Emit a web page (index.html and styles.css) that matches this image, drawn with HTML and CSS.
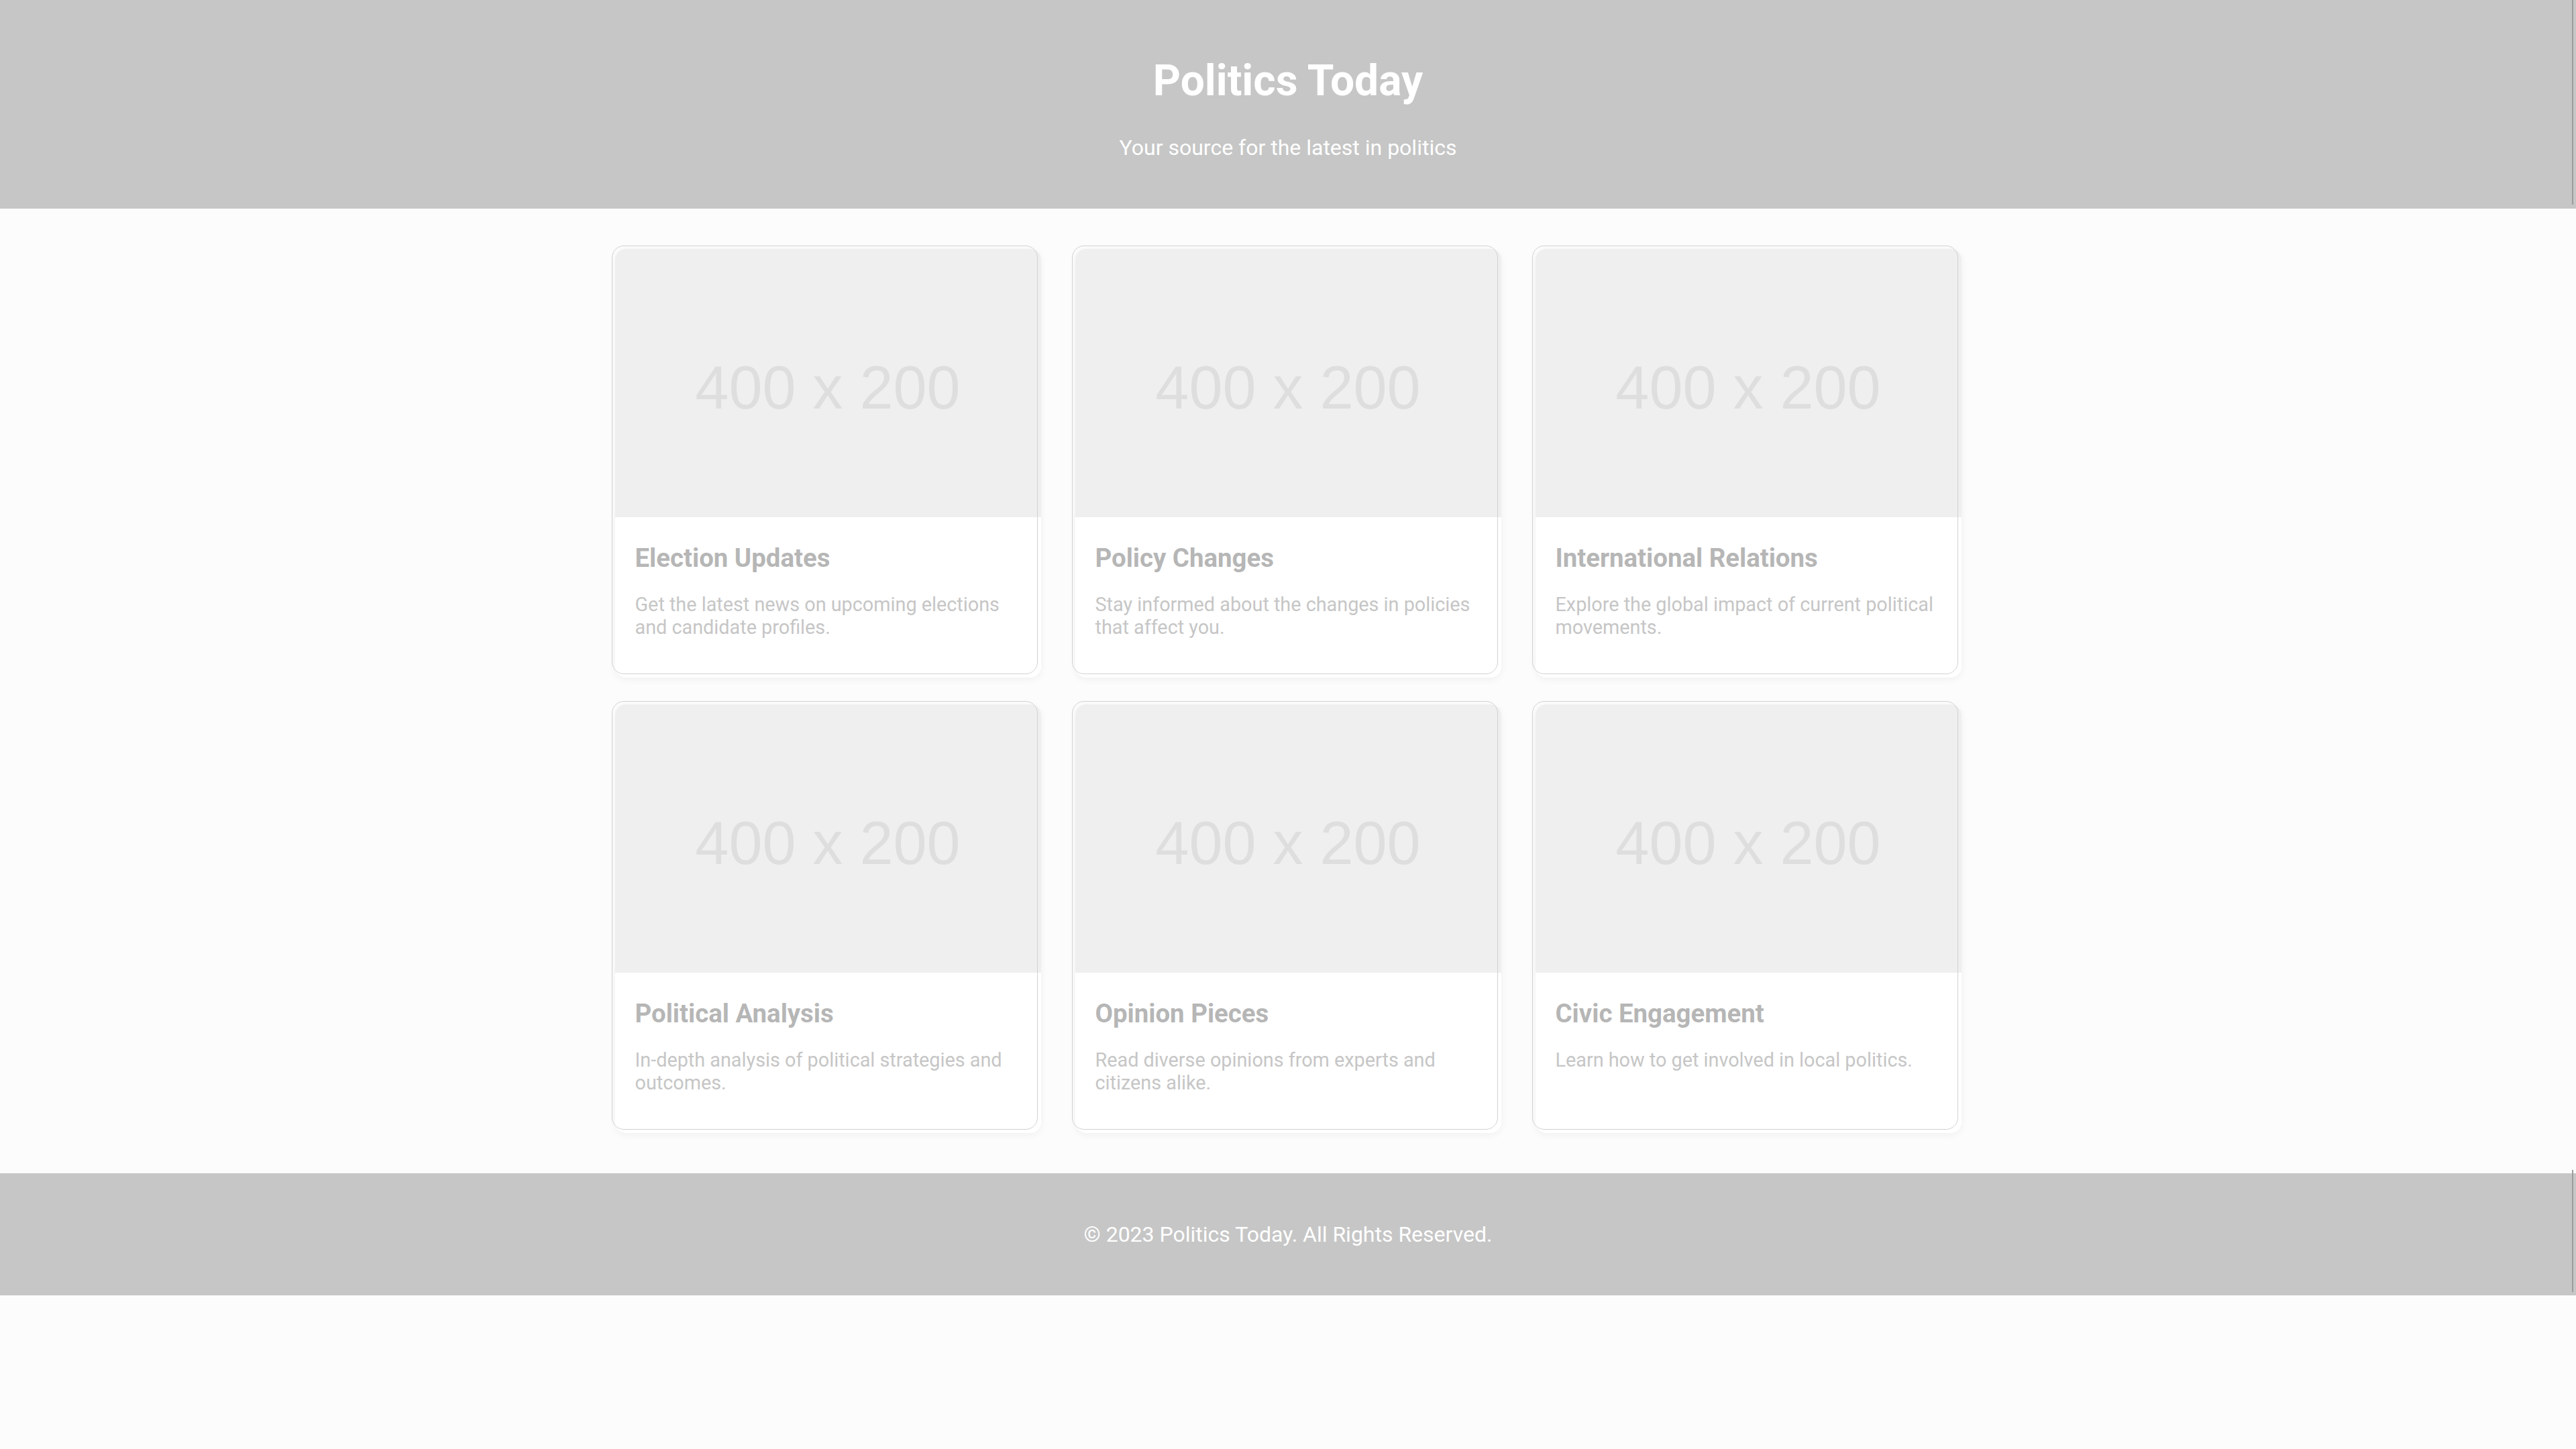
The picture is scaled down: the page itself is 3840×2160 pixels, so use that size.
FILE: index.html
```html
<!DOCTYPE html>
<html lang="en">
<head>
<meta charset="utf-8">
<title>Politics Today</title>
<link rel="stylesheet" href="styles.css">
</head>
<body>
<header class="site-header">
  <h1 class="site-title">Politics Today</h1>
  <p class="site-tagline">Your source for the latest in politics</p>
</header>
<main class="content">
  <div class="card-grid">
    <article class="card">
      <div class="card-image"><span>400 x 200</span></div>
      <div class="card-body">
        <h2 class="card-title">Election Updates</h2>
        <p class="card-text">Get the latest news on upcoming elections and candidate profiles.</p>
      </div>
    </article>
    <article class="card">
      <div class="card-image"><span>400 x 200</span></div>
      <div class="card-body">
        <h2 class="card-title">Policy Changes</h2>
        <p class="card-text">Stay informed about the changes in policies that affect you.</p>
      </div>
    </article>
    <article class="card">
      <div class="card-image"><span>400 x 200</span></div>
      <div class="card-body">
        <h2 class="card-title">International Relations</h2>
        <p class="card-text">Explore the global impact of current political movements.</p>
      </div>
    </article>
    <article class="card">
      <div class="card-image"><span>400 x 200</span></div>
      <div class="card-body">
        <h2 class="card-title">Political Analysis</h2>
        <p class="card-text">In-depth analysis of political strategies and outcomes.</p>
      </div>
    </article>
    <article class="card">
      <div class="card-image"><span>400 x 200</span></div>
      <div class="card-body">
        <h2 class="card-title">Opinion Pieces</h2>
        <p class="card-text">Read diverse opinions from experts and citizens alike.</p>
      </div>
    </article>
    <article class="card">
      <div class="card-image"><span>400 x 200</span></div>
      <div class="card-body">
        <h2 class="card-title">Civic Engagement</h2>
        <p class="card-text">Learn how to get involved in local politics.</p>
      </div>
    </article>
  </div>
</main>
<footer class="site-footer">
  <p class="footer-text">© 2023 Politics Today. All Rights Reserved.</p>
</footer>
</body>
</html>
```

FILE: styles.css
```css
html, body {
  margin: 0;
  padding: 0;
}

body {
  background: #fcfcfc;
  font-family: Roboto, "Liberation Sans", Arial, sans-serif;
  color: #b5b5b5;
}

.site-header {
  position: relative;
  background: #c6c6c6;
  color: #ffffff;
  text-align: center;
  padding: 40px;
}

.site-header::after {
  content: "";
  position: absolute;
  right: 4px;
  top: 0;
  bottom: 6px;
  width: 2px;
  background: #9c9c9c;
}

.site-title {
  font-size: 64px;
  font-weight: 700;
  line-height: normal;
  margin: 43px 0;
}

.site-tagline {
  font-size: 32px;
  line-height: normal;
  margin: 32px 0;
}

.content {
  padding: 60px 0;
}

.card-grid {
  width: 2007px;
  margin: 0 auto;
  display: grid;
  grid-template-columns: repeat(3, 635px);
  column-gap: 51px;
  row-gap: 40px;
}

.card {
  position: relative;
  background: #ffffff;
  border-radius: 16px;
  box-shadow: 0 3px 12px rgba(0, 0, 0, 0.05);
}

.card::before {
  content: "";
  position: absolute;
  top: -5px;
  left: -5px;
  width: 100%;
  height: 100%;
  box-sizing: border-box;
  border: 1px solid #d2d2d2;
  border-radius: 18px;
  pointer-events: none;
}

.card-image {
  height: 400px;
  background: #efefef;
  border-radius: 16px 16px 0 0;
  display: flex;
  align-items: center;
  justify-content: center;
  padding-top: 14px;
  box-sizing: border-box;
}

.card-image span {
  font-family: "Liberation Sans", Arial, sans-serif;
  font-size: 90px;
  color: #dedede;
}

.card-body {
  padding: 38px 30px 58px;
}

.card-title {
  font-size: 38.4px;
  font-weight: 700;
  line-height: normal;
  color: #b6b6b6;
  margin: 0 0 30px;
}

.card-text {
  font-size: 28.8px;
  line-height: normal;
  color: #c6c6c6;
  margin: 0;
}

.site-footer {
  position: relative;
  background: #c6c6c6;
  color: #ffffff;
  text-align: center;
  padding: 40px;
}

.site-footer::after {
  content: "";
  position: absolute;
  right: 4px;
  top: -5px;
  bottom: 5px;
  width: 2px;
  background: #9c9c9c;
}

.footer-text {
  font-size: 32px;
  line-height: normal;
  margin: 32px 0;
}
```
